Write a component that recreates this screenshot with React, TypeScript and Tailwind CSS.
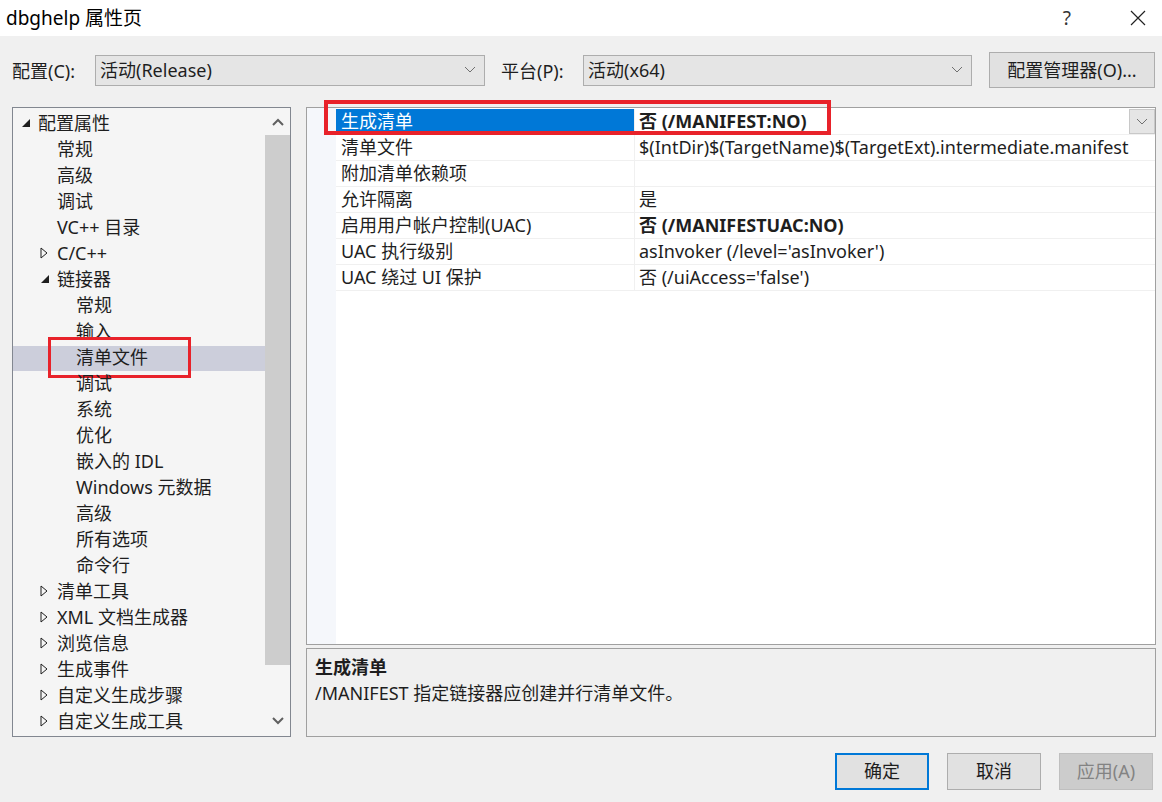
const font = "font-['Noto_Sans','Noto_Sans_CJK_SC',sans-serif]";

type Node = { label: string; level: number; arrow?: "open" | "closed"; selected?: boolean };

const tree: Node[] = [
  { label: "配置属性", level: 0, arrow: "open" },
  { label: "常规", level: 1 },
  { label: "高级", level: 1 },
  { label: "调试", level: 1 },
  { label: "VC++ 目录", level: 1 },
  { label: "C/C++", level: 1, arrow: "closed" },
  { label: "链接器", level: 1, arrow: "open" },
  { label: "常规", level: 2 },
  { label: "输入", level: 2 },
  { label: "清单文件", level: 2, selected: true },
  { label: "调试", level: 2 },
  { label: "系统", level: 2 },
  { label: "优化", level: 2 },
  { label: "嵌入的 IDL", level: 2 },
  { label: "Windows 元数据", level: 2 },
  { label: "高级", level: 2 },
  { label: "所有选项", level: 2 },
  { label: "命令行", level: 2 },
  { label: "清单工具", level: 1, arrow: "closed" },
  { label: "XML 文档生成器", level: 1, arrow: "closed" },
  { label: "浏览信息", level: 1, arrow: "closed" },
  { label: "生成事件", level: 1, arrow: "closed" },
  { label: "自定义生成步骤", level: 1, arrow: "closed" },
  { label: "自定义生成工具", level: 1, arrow: "closed" },
];

const props = [
  { name: "生成清单", value: "否 (/MANIFEST:NO)", bold: true, selected: true },
  { name: "清单文件", value: "$(IntDir)$(TargetName)$(TargetExt).intermediate.manifest" },
  { name: "附加清单依赖项", value: "" },
  { name: "允许隔离", value: "是" },
  { name: "启用用户帐户控制(UAC)", value: "否 (/MANIFESTUAC:NO)", bold: true },
  { name: "UAC 执行级别", value: "asInvoker (/level='asInvoker')" },
  { name: "UAC 绕过 UI 保护", value: "否 (/uiAccess='false')" },
];

const indent = ["pl-[8px]", "pl-[27px]", "pl-[46px]"];

function Chevron({ up = false, bold = false }: { up?: boolean; bold?: boolean }) {
  return (
    <svg width="12" height="8" viewBox="0 0 12 8">
      <polyline
        points={up ? "1,7 6,2 11,7" : "1,1 6,6 11,1"}
        fill="none"
        stroke={bold ? "#606060" : "#707070"}
        strokeWidth={bold ? 2 : 1}
      />
    </svg>
  );
}

function Arrow({ kind }: { kind?: "open" | "closed" }) {
  if (kind === "open")
    return (
      <svg width="10" height="10" viewBox="0 0 10 10">
        <polygon points="9,1 9,9 1,9" fill="#1e1e1e" />
      </svg>
    );
  if (kind === "closed")
    return (
      <svg width="8" height="12" viewBox="0 0 8 12">
        <polygon points="1,1 7,6 1,11" fill="none" stroke="#1e1e1e" strokeWidth="1" />
      </svg>
    );
  return null;
}

function Dropdown({ text, w }: { text: string; w: string }) {
  return (
    <div className={`${w} h-[31px] bg-[#e5e5e5] border border-[#adadad] flex items-center justify-between pl-[4px] pr-[8px]`}>
      <span>{text}</span>
      <Chevron />
    </div>
  );
}

export default function App() {
  return (
    <div className={`${font} w-[1162px] h-[802px] bg-[#f0f0f0] text-[18px] text-[#1e1e1e] flex flex-col overflow-hidden`}>
      {/* title bar */}
      <div className="h-[36px] bg-white flex items-center shrink-0">
        <span className="pl-[6px] text-[19px] text-black">dbghelp 属性页</span>
        <span className="ml-auto text-[19px] text-[#333] mr-[59px]">?</span>
        <svg width="16" height="16" viewBox="0 0 16 16" className="mr-[16px]">
          <path d="M1 1L15 15M15 1L1 15" stroke="#222" strokeWidth="1.2" />
        </svg>
      </div>

      {/* config row */}
      <div className="flex items-center mt-[16px] h-[36px] shrink-0">
        <span className="ml-[12px] w-[83px] pt-[3px]">配置(C):</span>
        <Dropdown text="活动(Release)" w="w-[390px]" />
        <span className="ml-[16px] w-[82px] pt-[3px]">平台(P):</span>
        <Dropdown text="活动(x64)" w="w-[389px]" />
        <button className="ml-[17px] w-[166px] h-[36px] bg-[#e1e1e1] border border-[#adadad]">配置管理器(O)...</button>
      </div>

      {/* main */}
      <div className="flex mt-[19px] h-[630px] shrink-0">
        <div className="ml-[12px] w-[279px] border border-[#828790] bg-[#f5f5f5] flex">
          <div className="flex-1 pt-[2px] overflow-hidden">
            {tree.map((n, i) => (
              <div key={i} className="relative h-[26px] flex items-center">
                {n.selected && (
                  <>
                    <div className="absolute inset-x-0 top-[2px] h-[25px] bg-[#cccedb]" />
                    <div className="absolute left-[35px] top-[-7px] w-[143px] h-[41px] border-[3px] border-[#e8222a]" />
                  </>
                )}
                <div className={`relative flex items-center ${indent[n.level]} whitespace-nowrap`}>
                  <span className="w-[17px] flex items-center">
                    <Arrow kind={n.arrow} />
                  </span>
                  <span>{n.label}</span>
                </div>
              </div>
            ))}
          </div>
          <div className="w-[25px] flex flex-col items-center">
            <div className="h-[27px] flex items-center">
              <Chevron up bold />
            </div>
            <div className="w-full h-[530px] bg-[#cdcdcd]" />
            <div className="flex-1" />
            <div className="h-[30px] flex items-center">
              <Chevron bold />
            </div>
          </div>
        </div>

        <div className="ml-[15px] w-[850px] flex flex-col">
          <div className="h-[539px] border border-[#a0a0a0] bg-white relative">
            <div className="absolute left-0 top-0 bottom-0 w-[29px] bg-[#f5f7fb]" />
            <div className="relative pt-[1px]">
              {props.map((p, i) => (
                <div key={i} className="h-[26px] flex border-b border-[#f0f0f0] ml-[29px]">
                  <div className={`w-[298px] pl-[5px] flex items-center ${p.selected ? "bg-[#0078d7] text-white" : ""}`}>
                    {p.name}
                  </div>
                  <div className={`flex-1 pl-[4px] flex items-center border-l border-[#f0f0f0] whitespace-nowrap ${p.bold ? "font-bold" : ""}`}>
                    {p.value}
                  </div>
                  {p.selected && (
                    <div className="w-[26px] h-[25px] bg-[#e5e5e5] border border-[#c8c8c8] flex items-center justify-center">
                      <Chevron />
                    </div>
                  )}
                </div>
              ))}
              <div className="absolute left-[17px] top-[-8px] w-[507px] h-[35px] border-[4px] border-[#e8222a]" />
            </div>
          </div>
          <div className="mt-[3px] h-[89px] border border-[#a0a0a0] bg-[#f0f0f0] px-[8px] pt-[5px] leading-[26px]">
            <div className="font-bold">生成清单</div>
            <div>/MANIFEST 指定链接器应创建并行清单文件。</div>
          </div>
        </div>
      </div>

      {/* footer */}
      <div className="flex justify-end mt-[16px] mr-[9px] gap-[18px]">
        <button className="w-[94px] h-[37px] bg-[#e1e1e1] border-2 border-[#0078d7]">确定</button>
        <button className="w-[94px] h-[37px] bg-[#e1e1e1] border border-[#adadad]">取消</button>
        <button className="w-[94px] h-[37px] bg-[#cccccc] border border-[#bfbfbf] text-[#838383]">应用(A)</button>
      </div>
    </div>
  );
}
